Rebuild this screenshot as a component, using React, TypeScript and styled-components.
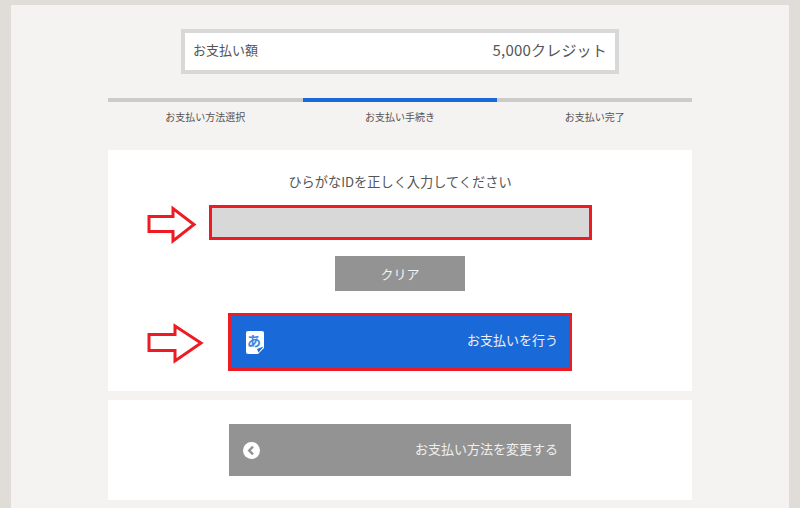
import React from 'react';
import styled, { createGlobalStyle } from 'styled-components';

const GlobalStyle = createGlobalStyle`
  html, body {
    margin: 0;
    height: 508px;
    overflow: hidden;
    background: #e0dcd8;
    font-family: "Noto Sans CJK JP", "Open Sans", sans-serif;
  }
`;

const Page = styled.div`
  box-sizing: border-box;
  height: 508px;
  padding: 5px 11px 0;
`;

const Panel = styled.main`
  display: flex;
  flex-direction: column;
  align-items: center;
  height: 503px;
  background: #f5f3f1;
`;

const AmountBox = styled.div`
  box-sizing: border-box;
  display: flex;
  align-items: center;
  justify-content: space-between;
  width: 438px;
  height: 45px;
  margin-top: 24px;
  padding: 0 8px 3px 8px;
  background: #fff;
  border: 4px solid #d8d8d8;
  color: #555;
`;

const AmountLabel = styled.span`
  font-size: 13px;
  line-height: 18px;
`;

const AmountValue = styled.span`
  font-size: 15px;
  line-height: 20px;
  letter-spacing: 0.2px;
`;

const Steps = styled.ol`
  display: grid;
  grid-template-columns: repeat(3, 1fr);
  width: 584px;
  margin: 24px 0 0;
  padding: 0;
  list-style: none;
`;

const Step = styled.li<{ $active?: boolean }>`
  height: 26px;
  padding-top: 7px;
  border-top: 4px solid ${(props) => (props.$active ? '#1a69d8' : '#cdcbc9')};
  color: #555;
  font-size: 10px;
  line-height: 15px;
  text-align: center;
`;

const Card = styled.section`
  position: relative;
  display: flex;
  flex-direction: column;
  align-items: center;
  width: 584px;
  background: #fff;
`;

const PayCard = styled(Card)`
  height: 241px;
  margin-top: 15px;
`;

const BackCard = styled(Card)`
  justify-content: center;
  height: 100px;
  margin-top: 9px;
`;

const Heading = styled.p`
  margin: 23px 0 0;
  color: #555;
  font-size: 13.2px;
  line-height: 18px;
`;

const IdInput = styled.div`
  box-sizing: border-box;
  width: 383px;
  height: 35px;
  margin: 14px 0 0;
  background: #d8d8d8;
  border: 3px solid #ed1c24;
`;

const ClearButton = styled.button`
  width: 130px;
  height: 35px;
  margin-top: 16px;
  padding: 0;
  border: none;
  background: #939393;
  color: #f4f4f4;
  font: inherit;
  font-size: 13px;
`;

const ActionButton = styled.button<{ $tone: 'blue' | 'gray' }>`
  box-sizing: border-box;
  display: flex;
  align-items: center;
  justify-content: space-between;
  background: ${(props) => (props.$tone === 'blue' ? '#1a69d8' : '#939393')};
  border: ${(props) => (props.$tone === 'blue' ? '3px solid #ed1c24' : 'none')};
  color: #f0f0f0;
  font: inherit;
  font-size: 13px;
`;

const ButtonLabel = styled.span<{ $lift: number }>`
  line-height: 18px;
  margin-bottom: ${(props) => props.$lift}px;
`;

const PayButton = styled(ActionButton)`
  width: 344px;
  height: 58px;
  margin-top: 22px;
  padding: 0 11px 0 15px;
`;

const BackButton = styled(ActionButton)`
  width: 342px;
  height: 52px;
  padding: 0 13px 0 14px;
`;

const Arrow = styled.svg<{ $top: number }>`
  position: absolute;
  left: 39px;
  top: ${(props) => props.$top}px;
`;

function NoteIcon() {
  return (
    <svg width="18" height="23" viewBox="0 0 18 23">
      <path d="M2 0h14a2 2 0 0 1 2 2v15l-6 6H2a2 2 0 0 1-2-2V2a2 2 0 0 1 2-2z" fill="#fff" />
      <path d="M17.5 15.5l-5 6-1.5-3.500z" fill="#1a69d8" />
      <text x="1" y="15" fontSize="14" fontWeight="700" fill="#3d8ae0" fontFamily="Noto Sans CJK JP">あ</text>
    </svg>
  );
}

function BackIcon() {
  return (
    <svg width="17" height="17" viewBox="0 0 17 17">
      <circle cx="8.5" cy="8.5" r="8.5" fill="#fff" />
      <path d="M10 4.6L6.2 8.5l3.8 3.9" fill="none" stroke="#939393" strokeWidth="2.4" />
    </svg>
  );
}

function App() {
  return (
    <Page>
      <GlobalStyle />
      <Panel>
        <AmountBox>
          <AmountLabel>お支払い額</AmountLabel>
          <AmountValue>5,000クレジット</AmountValue>
        </AmountBox>
        <Steps>
          <Step>お支払い方法選択</Step>
          <Step $active>お支払い手続き</Step>
          <Step>お支払い完了</Step>
        </Steps>
        <PayCard>
          <Heading>ひらがなIDを正しく入力してください</Heading>
          <IdInput />
          <ClearButton type="button">クリア</ClearButton>
          <PayButton type="button" $tone="blue">
            <NoteIcon />
            <ButtonLabel $lift={4}>お支払いを行う</ButtonLabel>
          </PayButton>
          <Arrow $top={55} width="50" height="40" viewBox="0 0 50 40">
            <path d="M2 11.5h24V3.5L47 19.5 26 36v-9.5H2z" fill="#fff" stroke="#ed1c24" strokeWidth="3" />
          </Arrow>
          <Arrow $top={173} width="58" height="42" viewBox="0 0 58 42">
            <path d="M2 11.500h26V3l26 17-26 18v-10.500H2z" fill="#fff" stroke="#ed1c24" strokeWidth="3" />
          </Arrow>
        </PayCard>
        <BackCard>
          <BackButton type="button" $tone="gray">
            <BackIcon />
            <ButtonLabel $lift={2}>お支払い方法を変更する</ButtonLabel>
          </BackButton>
        </BackCard>
      </Panel>
    </Page>
  );
}

export default App;
